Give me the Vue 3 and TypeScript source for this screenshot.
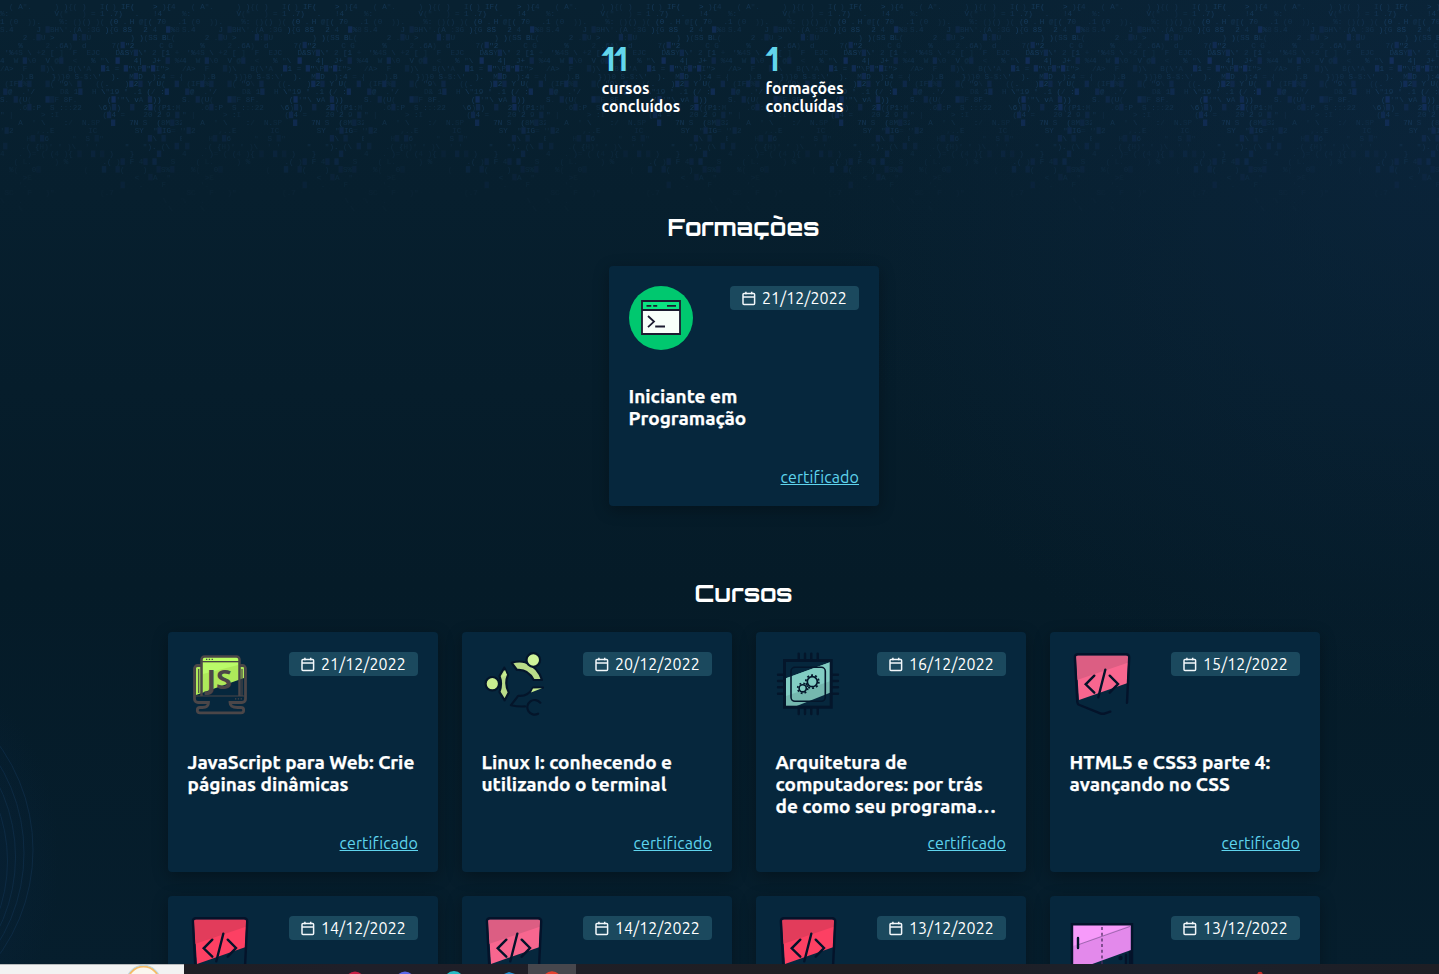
<script setup lang="ts">
type IconKind = 'terminal' | 'js' | 'linux' | 'chip' | 'code' | 'layout'

interface Course {
  title: string
  date: string
  icon: IconKind
  tone?: 'pink' | 'red'
}

interface Stat {
  value: number
  lines: [string, string]
}

interface Fragment {
  x: number
  y: number
  ch: string
  block: boolean
  opacity: number
}

const stats: Stat[] = [
  { value: 11, lines: ['cursos', 'concluídos'] },
  { value: 1, lines: ['formações', 'concluídas'] },
]

const sections: { title: string; items: Course[] }[] = [
  {
    title: 'Formações',
    items: [{ title: 'Iniciante em Programação', date: '21/12/2022', icon: 'terminal' }],
  },
  {
    title: 'Cursos',
    items: [
      { title: 'JavaScript para Web: Crie páginas dinâmicas', date: '21/12/2022', icon: 'js' },
      { title: 'Linux I: conhecendo e utilizando o terminal', date: '20/12/2022', icon: 'linux' },
      { title: 'Arquitetura de computadores: por trás de como seu programa…', date: '16/12/2022', icon: 'chip' },
      { title: 'HTML5 e CSS3 parte 4: avançando no CSS', date: '15/12/2022', icon: 'code', tone: 'pink' },
      { title: '', date: '14/12/2022', icon: 'code', tone: 'red' },
      { title: '', date: '14/12/2022', icon: 'code', tone: 'pink' },
      { title: '', date: '13/12/2022', icon: 'code', tone: 'red' },
      { title: '', date: '13/12/2022', icon: 'layout' },
    ],
  },
]

// Code rain tile: 40 columns by 27 rows; each run is [start column, characters].
const COL = 4.55
const ROW = 7.77
const rain: [number, string][][] = [
  [[2, '( A".'], [12, ') ){( )   I('], [24.6, ') IF('], [33.6, '> ){4']],
  [[0, '%:'], [12, 'V("'], [18, ') = 1 .7)'], [29.6, '.   !4']],
  [[0, '1 (0  )).'], [13, '%: ()() )( (0 .'], [28.5, 'H @[( 70'], [39, '.']],
  [[0, 'S.4'], [8, 'J █BH\\\'.(A :3G ){G 8S'], [31.5, '2 4  █%8']],
  [[5, '2 .█U >'], [16, '█:█U'], [28.6, ') )(SS BL(']],
  [[4, '%     2 .6A)  d'], [24.5, '7(█"2'], [35, 'C G  L=']],
  [[1, '\'%4S \\ +2 [ ]  F  EJC'], [25.4, 'D&SY█\\\' 2 [1 +']],
  [[0, '4  W █\\0  V @█  <   % "\\'], [25.4, '█   4|  J+ █ %4']],
  [[0, '/A>  F   █)\\   B(\\\'A'], [22.2, '█1 = █"\\P█"█I">']],
  [[4.4, ').B    })}0 S-$:\\\''], [24.4, ').  M█D  ):4 = {█']],
  [[1, '(IF█%█'], [10, '█( "9\\ █   ((.'], [27.4, ')█2█ Y U(  █']],
  [[0.7, '█@  .\'/'], [13.2, 'D& 1█  H \\"19 \' .1 (/ :█']],
  [[0, 'S. █(U('], [10, '██F 8F.'], [23.5, '(█\'"\\ vA █))']],
  [[4, '.6█:P  S :::22'], [21.6, '\\6)█)  █  2█((P1:M']],
  [[0, '" |'], [9, '> :I'], [22.5, '(█4 =    20 2 9 █']],
  [[4, 'A  \' \\    :/  N.SP'], [24.4, '█   7N S  (8M█32']],
  [[0, '\'█2     ,..E'], [19.4, 'IC'], [29.6, 'SY  "█IG= "█2']],
  [[5.8, 'H█ █6     "  S █"'], [32.5, '█\\ █   B']],
  [[0.7, '█   .( {H)\' \' )\\  \' \''], [27.4, '"   "). (\\ █']],
  [[0, '4   . )= ( (4 ){ █  █ █ )'], [28.5, '}     █']],
  [[3, '( L.     ) %'], [22.5, '.( )█ F 4█ █   S']],
  [[2, '%(   0█'], [18.4, '(   █  █(    )  █S%█']],
  [[5, '>E'], [29.6, '<  █A  "']],
  [[4, "'."], [26.5, '█   .    F']],
  [[1, 'SC   F   )"'], [22, '(.7']],
  [[0, '\\   .'], [35.7, '\\   \\']],
  [[4, '\\'], [37, '\\']],
]

const fragments: Fragment[] = rain.flatMap((runs, r) =>
  runs.flatMap(([start, text]) =>
    Array.from(text).flatMap((ch, i) => {
      if (ch === ' ') return []
      const column = start + i
      const fade = r < 13 ? 1 : Math.max(0.18, 1 - (r - 12) / 15)
      const glow = column > 22 && column < 37 ? 1 : 0.66
      const flicker = 0.6 + ((r * 7 + Math.round(column) * 11) % 5) * 0.12
      return [{ x: column * COL, y: 6.2 + r * ROW, ch, block: ch === '█', opacity: fade * glow * flicker }]
    }),
  ),
)
</script>

<template>
  <main class="page">
    <svg class="backdrop" width="1439" height="974" aria-hidden="true">
      <defs>
        <pattern id="rain" width="182" height="220" patternUnits="userSpaceOnUse">
          <template v-for="(f, i) in fragments" :key="i">
            <rect v-if="f.block" :x="f.x" :y="f.y - 3.2" width="4.2" height="6.4" fill="#17356f" :opacity="f.opacity * 0.55" />
            <text v-else :x="f.x" :y="f.y + 2.5" class="glyph" :opacity="f.opacity * 0.62">{{ f.ch }}</text>
          </template>
        </pattern>
      </defs>
      <rect width="1439" height="220" fill="url(#rain)" />
      <g class="rings">
        <circle cx="-147" cy="850" r="180" />
        <circle cx="-147" cy="853" r="171" />
        <circle cx="-147" cy="857" r="162.5" />
        <circle cx="-147" cy="861" r="154.5" />
      </g>
    </svg>

    <div class="content">
      <div class="stats">
        <div v-for="s in stats" :key="s.lines[0]" class="stat">
          <strong class="stat-value">{{ s.value }}</strong>
          <span v-for="line in s.lines" :key="line" class="stat-label">{{ line }}</span>
        </div>
      </div>

      <section v-for="section in sections" :key="section.title" class="section">
        <h2 class="heading">{{ section.title }}</h2>
        <div class="cards">
          <article v-for="(c, i) in section.items" :key="i" class="card">
            <div class="card-top">
              <svg class="icon" width="64" height="64" viewBox="0 0 64 64" fill="none">
                <template v-if="c.icon === 'terminal'">
                  <circle cx="32" cy="32" r="32" fill="#00c86f" />
                  <rect x="13" y="15" width="38" height="33" fill="#f8fffa" />
                  <path d="M13 15h38v9H13z" fill="#0be582" />
                  <path d="M13 15h38v33H13zM13 24h38" stroke="#1c1b30" stroke-width="1.8" />
                  <path d="M17.5 19.8h4.8M24.2 19.8h4M38 19.8h9" stroke="#1c1b30" stroke-width="1.7" />
                  <path d="M19 30l6 5.6-6 5.6M26.2 40.5H36" stroke="#1c1b30" stroke-width="1.8" />
                </template>

                <template v-else-if="c.icon === 'js'">
                  <path d="M8 15h6V5h38v10h4v11L8 43z" fill="#aee95a" />
                  <path d="M14 5h38v4H14z" fill="#b9ff62" />
                  <path d="M15 11h35v2L15 22z" fill="#bafa69" />
                  <path d="M13.5 13.5h-4a3 3 0 0 0-3 3V47a3.5 3.5 0 0 0 3.5 3.500H20.500c0 3.500-2.500 5-6 5H12a2.700 2.700 0 0 0 0 5.400h41a2.700 2.700 0 0 0 0-5.400h-3.500c-4 0-7.500-1.500-7.500-5h12a3.500 3.500 0 0 0 3.500-3.500V16.500a3 3 0 0 0-3-3h-3" stroke="#4b4648" stroke-width="2.800" />
                  <path d="M13.500 44V7.500a3 3 0 0 1 3-3h32a3 3 0 0 1 3 3V44" stroke="#4b4648" stroke-width="2.500" />
                  <path d="M14 9.700h37M8 44h48M10.700 17v24M54 17v27" stroke="#4b4648" stroke-width="1.200" />
                  <path d="M18 7.300h7M47 46.800h8" stroke="#4b4648" stroke-width="1.300" stroke-dasharray="1.300 1.500" />
                  <text x="18.500" y="36.900" class="js" textLength="25.500" lengthAdjust="spacingAndGlyphs">JS</text>
                </template>

                <template v-else-if="c.icon === 'linux'">
                  <g stroke="#04152a" stroke-width="2.200" stroke-linejoin="round">
                    <circle cx="10.300" cy="31.700" r="6.700" fill="#c9ed91" />
                    <path d="M22.300 15.700L26 23q-3.800 8.700.8 17.500l-4.100 7.800L17.500 40q3-8.300 0-16z" fill="#b9db89" />
                    <path d="M29.700 10.800q7-2.300 13.500-.6Q56 15 60 28h-8.300Q46 17 35 18z" fill="#b9db89" />
                    <circle cx="51.300" cy="8" r="6.800" fill="#cff39a" />
                    <path d="M61 35.700H51q-5 9-14.800 8.100L29 53.200q7 1.600 14 1.200M58.300 50.700a7.300 7.300 0 1 0-2.200 11" stroke-linecap="round" />
                  </g>
                  <path d="M23 18l2 5-5 2zM49 40.500l2-4 9-.2z" fill="#c9ed91" />
                </template>

                <template v-else-if="c.icon === 'chip'">
                  <path d="M10 26.300L54 10.300v30.400L20.700 54H10z" fill="#75b8af" />
                  <path d="M10 26.300L54 10.300v19L10 44z" fill="#82cdc3" />
                  <rect x="8.500" y="8.500" width="46.700" height="46.700" stroke="#04162b" stroke-width="3" />
                  <rect x="15" y="15.300" width="34.300" height="34" rx="4" stroke="#04162b" stroke-width="1.600" />
                  <path d="M22.700 1.600V7M29 1.600V7M35.300 1.600V7M41.700 1.600V7M22.700 57v5M29 57v5M35.300 57v5M41.700 57v5M2 22.700h5M2 29h5M2 35.300h5M2 41.700h5M57 22.700h5M57 29h5M57 35.300h5M57 41.700h5" stroke="#04162b" stroke-width="2.400" stroke-linecap="round" />
                  <g stroke="#04162b">
                    <circle cx="36.300" cy="29.700" r="5" stroke-width="1.700" />
                    <circle cx="36.300" cy="29.700" r="6.500" stroke-width="1.800" stroke-dasharray="2 2.080" />
                    <circle cx="26.700" cy="36.300" r="3.600" stroke-width="1.600" />
                    <circle cx="26.700" cy="36.300" r="5" stroke-width="1.700" stroke-dasharray="1.800 2.130" />
                  </g>
                </template>

                <template v-else-if="c.icon === 'code'">
                  <path d="M6 3.500h52.500L57 31.200 9 48z" :class="['shield', c.tone]" />
                  <path d="M6 3.500h52.500v7L7 28z" :class="['shield-shade', c.tone]" />
                  <path d="M57 50.700L59.200 5.500Q59.300 2.300 56 2.300H8Q4.700 2.300 4.900 5.500L7.300 50q.1 2.200 2.200 3l20.700 8.300q2.500 1 5 0l5.100-1.600" stroke="#04132a" stroke-width="2.400" stroke-linecap="round" />
                  <path d="M24.300 23.700l-8.600 8.600 8.600 8.400M35.300 17.700l-7 27.600M39.700 23.700l8.300 8.300-8.300 8.700" stroke="#04132a" stroke-width="2.400" stroke-linecap="round" />
                </template>

                <template v-else>
                  <path d="M3 9h58v25L3 55z" fill="#e389eb" />
                  <path d="M3 9h58L3 30z" fill="#f79afa" />
                  <path d="M9 28.500L60 10.500" stroke="#5f4576" stroke-width=".5" />
                  <path d="M2 64V8.200h60V64" stroke="#04132a" stroke-width="2.400" />
                  <path d="M32 11v40" stroke="#4d2d60" stroke-width="1.300" stroke-dasharray="3 2.700" />
                  <path d="M8 22v10M56 39v20M60 36v24" stroke="#04132a" stroke-width="2.400" stroke-linecap="round" />
                  <circle cx="50.500" cy="42" r="2.200" fill="#04132a" />
                </template>
              </svg>

              <time class="date">
                <svg width="14" height="15" viewBox="0 0 14 15" fill="none" stroke="#f3f8fb" stroke-width="1.500">
                  <rect x="1" y="2.600" width="11.600" height="11" rx="1" />
                  <path d="M1 5.900h11.600M3.900.7v2.500M9.700.7v2.500" />
                </svg>
                <span class="date-text">{{ c.date }}</span>
              </time>
            </div>
            <h3 class="title">{{ c.title }}</h3>
            <a v-if="c.title" class="link">certificado</a>
          </article>
        </div>
      </section>
    </div>

    <svg class="taskbar" width="1439" height="10" aria-hidden="true">
      <defs>
        <linearGradient id="bar"><stop offset="0" stop-color="#1d1d1f" /><stop offset=".25" stop-color="#1f1f29" /><stop offset=".6" stop-color="#1f1e22" /><stop offset=".8" stop-color="#1c212c" /><stop offset="1" stop-color="#1e1e24" /></linearGradient>
      </defs>
      <rect width="1439" height="10" fill="url(#bar)" />
      <rect width="184" height="10" fill="#f2f2f2" />
      <path d="M0 .5h184" stroke="#b9bbbc" />
      <circle cx="143.500" cy="18.500" r="16" fill="#fbf7ef" stroke="#f5bd69" stroke-width="2" />
      <circle cx="143.500" cy="18.500" r="17.300" stroke="#b5d6e4" fill="none" />
      <rect x="528" width="48" height="10" fill="#47474d" />
      <circle cx="355" cy="17" r="9.500" fill="#c51e43" />
      <circle cx="405" cy="17" r="9.500" fill="#5967e8" />
      <circle cx="454" cy="17" r="10" fill="#25bcc5" />
      <path d="M504 10l5-2 6 2z" fill="#2292d4" />
      <circle cx="552" cy="17" r="9.700" fill="#e5412f" />
      <circle cx="1260" cy="10.500" r="2.700" fill="#c72d26" />
    </svg>
  </main>
</template>

<style>
body {
  margin: 0;
  background: #051c29;
}
</style>

<style scoped>
.page {
  position: relative;
  width: 1439px;
  height: 974px;
  overflow: hidden;
  color: #fff;
  font-family: Ubuntu, "Noto Sans", sans-serif;
  background:
    radial-gradient(ellipse 620px 560px at 1439px 160px, rgba(13, 40, 68, 0.5), transparent),
    radial-gradient(ellipse 130px 190px at -70px 860px, rgba(9, 36, 62, 0.7), transparent),
    linear-gradient(180deg, #08223300 0, #051b28 60%, #061e2d 100%),
    #082131;
}

.backdrop {
  position: absolute;
  inset: 0;
}

.glyph {
  font: 7.500px "Liberation Mono", monospace;
  fill: #1b4672;
}

.rings {
  fill: none;
  stroke: #113251;
  stroke-width: 0.6;
}

.content {
  position: relative;
  width: 1152px;
  margin-left: 168px;
}

.stats {
  display: flex;
  gap: 24px;
  height: 172px;
  padding: 40px 0 0 433.500px;
}

.stat {
  display: flex;
  flex-direction: column;
  width: 140px;
}

.stat-value {
  height: 39px;
  font: bold 32px/38px Orbitron, "Noto Sans", sans-serif;
  color: #63d6ec;
}

.stat-label {
  font-size: 15.800px;
  line-height: 18px;
  font-weight: 700;
}

.section {
  height: 366px;
}

.heading {
  height: 54px;
  margin: 0;
  padding-right: 1px;
  text-align: center;
  font: bold 24px/30px Orbitron, "DejaVu Sans", sans-serif;
}

.cards {
  display: flex;
  flex-wrap: wrap;
  justify-content: center;
  gap: 24px;
}

.card {
  display: flex;
  flex-direction: column;
  box-sizing: border-box;
  width: 270px;
  height: 240px;
  padding: 20px;
  border-radius: 4px;
  background: #06273d;
  box-shadow: 0 4px 16px rgba(0, 0, 0, 0.3);
}

.card-top {
  display: flex;
  justify-content: space-between;
  align-items: flex-start;
  height: 99px;
}

.date {
  display: flex;
  align-items: center;
  box-sizing: border-box;
  gap: 6px;
  width: 129px;
  height: 24px;
  padding-left: 12px;
  border-radius: 4px;
  background: #1b495e;
  font-size: 16px;
  letter-spacing: 0.1px;
  white-space: nowrap;
}

.js {
  font: bold 26px "Noto Sans", sans-serif;
  fill: #4b4648;
}

.shield.pink {
  fill: #f8668f;
}

.shield-shade.pink {
  fill: #dc5e83;
}

.shield.red {
  fill: #fd4063;
}

.shield-shade.red {
  fill: #e23c5b;
}

.title {
  flex: 1;
  margin: 0 0 0 -0.500px;
  font-size: 19px;
  line-height: 22px;
  font-weight: 700;
  -webkit-text-stroke: 0.25px #fff;
}

.link {
  align-self: flex-end;
  font-size: 16px;
  line-height: 18px;
  letter-spacing: 0.1px;
  color: #5fd4ee;
  text-decoration: underline;
}

.taskbar {
  position: absolute;
  left: 0;
  bottom: 0;
}
</style>
